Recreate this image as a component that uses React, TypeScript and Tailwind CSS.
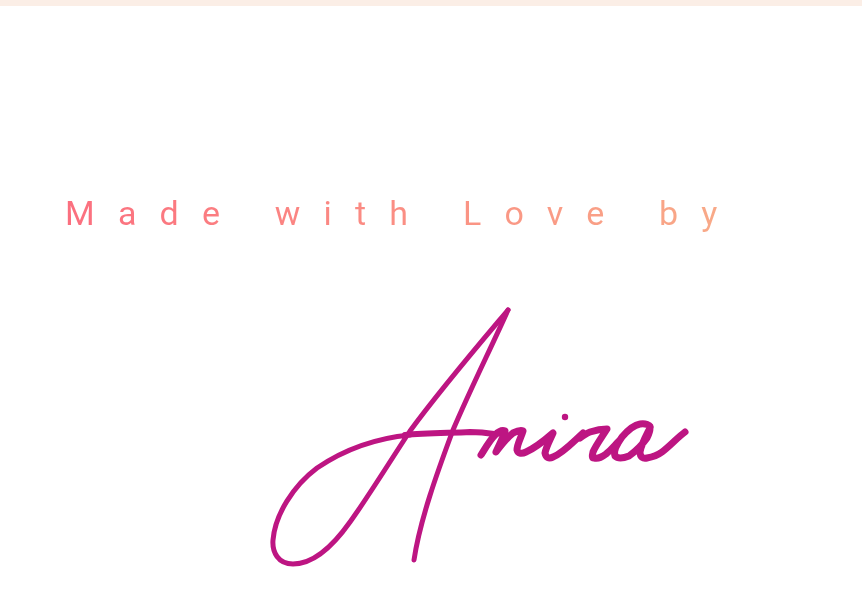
import React from 'react';

const Signature = () => (
  <svg width="430" height="270" viewBox="265 305 430 270" fill="none" stroke="#bd1582" strokeLinecap="round" strokeLinejoin="round" role="img" aria-label="Amira signature">
    {/* big loop of the A */}
    <path strokeWidth="5" d="M508 310 C470 355 440 390 410 431 C387 466 368 497 350 522 C333 546 313 564 293 564 C278 564 272 552 273 540 C275 515 293 486 317 468 C345 449 378 438 410 435" />
    {/* right leg */}
    <path strokeWidth="5" d="M508 310 C490 350 470 390 453 430 C437 473 420 520 414 560" />
    {/* cross bar */}
    <path strokeWidth="6" d="M405 435 C425 433 450 433 470 432 C480 432 488 433 494 434" />
    {/* rest of the name */}
    <path strokeWidth="7" d="M481 455 C486 447 490 440 495 435 C499 431 503 430 505 431 C503 438 499 445 496 452 C502 444 508 437 513 433 C517 431 521 430 523 431 C521 438 517 444 517 450 C518 454 522 454 526 452 C535 448 545 440 553 433 C550 440 546 447 545 453 C546 458 549 459 553 457 C563 453 573 442 583 433" />
    <path strokeWidth="7" d="M580 438 C584 435 587 433 590 432 C596 430 602 429 607 429 C602 437 596 445 593 452 C592 456 592 458 594 458 C599 459 602 457 606 454 C612 449 615 445 618 442" />
    <path strokeWidth="7" d="M650 428 C651 425 645 423 640 424 C634 425 628 430 622 437 C617 444 613 451 615 456 C618 459 624 458 629 456 C636 451 642 445 647 438 C649 434 650 431 650 428 C646 436 641 445 640 452 C640 457 643 459 647 458 C653 457 658 455 662 452 C670 446 678 437 685 432" />
    <circle cx="565" cy="417" r="3.2" fill="#bd1582" stroke="none" />
  </svg>
);

export default function App() {
  return (
    <div className="min-h-[614px] bg-white font-['Roboto',sans-serif]">
      <div className="h-1.5 bg-[#fbeee6]" />
      <div className="pt-[182px] pl-[65px]">
        <p className="w-fit bg-gradient-to-r from-[#fb6f7f] to-[#f8ab88] bg-clip-text text-[34px] leading-[50px] tracking-[23.2px] text-transparent">
          Made with Love by
        </p>
      </div>
      <div className="pl-[265px] pt-[67px]">
        <Signature />
      </div>
    </div>
  );
}
